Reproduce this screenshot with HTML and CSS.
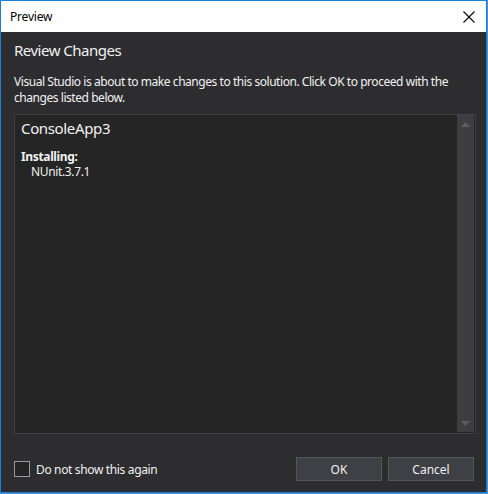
FILE: index.html
```html
<!DOCTYPE html>
<html>
<head>
<meta charset="utf-8">
<link rel="stylesheet" href="styles.css">
</head>
<body>
<div class="window">
  <div class="titlebar">
    <span class="title">Preview</span>
    <svg class="close" width="12" height="12" viewBox="0 0 12 12"><path d="M0.5 0.5 L11.5 11.5 M11.5 0.5 L0.5 11.5" stroke="#000" stroke-width="1.1" fill="none"/></svg>
  </div>
  <div class="body">
    <div class="heading">Review Changes</div>
    <div class="desc">Visual Studio is about to make changes to this solution. Click OK to proceed with the changes listed below.</div>
    <div class="changes">
      <div class="list">
        <div class="project">ConsoleApp3</div>
        <div class="label">Installing:</div>
        <div class="item">NUnit.3.7.1</div>
      </div>
      <div class="scrollbar">
        <svg width="9" height="5" viewBox="0 0 9 5"><path d="M0 5 L4.5 0 L9 5 Z" fill="#5e5e62"/></svg>
        <svg width="9" height="5" viewBox="0 0 9 5"><path d="M0 0 L4.5 5 L9 0 Z" fill="#5e5e62"/></svg>
      </div>
    </div>
    <div class="footer">
      <label class="check"><span class="box"></span>Do not show this again</label>
      <div class="buttons">
        <button class="btn">OK</button>
        <button class="btn">Cancel</button>
      </div>
    </div>
  </div>
</div>
</body>
</html>
```
FILE: styles.css
```css
html, body {
  margin: 0;
  padding: 0;
  background: #4a8fd6;
  width: 488px;
  height: 494px;
  overflow: hidden;
}
.window {
  width: 487px;
  height: 493px;
  box-sizing: border-box;
  border: 1px solid #1a7fd8;
  display: flex;
  flex-direction: column;
  font-family: "Noto Sans", "Open Sans", sans-serif;
  font-size: 12px;
  letter-spacing: -0.35px;
}
.titlebar {
  height: 31px;
  background: #ffffff;
  display: flex;
  align-items: center;
  justify-content: space-between;
  padding: 0 10px 0 9px;
  flex: none;
}
.title {
  color: #000;
  font-size: 12px;
  letter-spacing: -0.2px;
}
.close {
  display: block;
  margin-right: 1px;
}
.body {
  flex: 1;
  background: #2d2d30;
  color: #f1f1f1;
  padding: 0 10px 0 13px;
  display: flex;
  flex-direction: column;
}
.heading {
  font-size: 15px;
  margin-top: 8px;
  line-height: 20px;
  letter-spacing: -0.5px;
}
.desc {
  margin-top: 14px;
  line-height: 16px;
  letter-spacing: -0.45px;
}
.changes {
  margin-top: 8px;
  height: 320px;
  box-sizing: border-box;
  border: 1px solid #3f3f46;
  background: #252526;
  display: flex;
}
.list {
  flex: 1;
  padding: 3px 0 0 6px;
}
.project {
  font-size: 15px;
  line-height: 20px;
  letter-spacing: -0.35px;
}
.label {
  font-weight: bold;
  margin-top: 11px;
  line-height: 15px;
}
.item {
  padding-left: 10px;
  line-height: 15px;
}
.scrollbar {
  width: 17px;
  background: #3e3e42;
  margin: 0 1px 1px 0;
  display: flex;
  flex-direction: column;
  justify-content: space-between;
  align-items: center;
  padding: 7px 0 6px;
}
.scrollbar svg {
  display: block;
}
.footer {
  display: flex;
  justify-content: space-between;
  align-items: center;
  margin-top: 23px;
}
.check {
  display: flex;
  align-items: center;
  gap: 6px;
}
.box {
  width: 14px;
  height: 14px;
  border: 1px solid #999999;
  background: #252526;
}
.buttons {
  display: flex;
  gap: 6px;
  margin-right: 2px;
}
.btn {
  width: 86px;
  height: 24px;
  box-sizing: border-box;
  background: #3f3f46;
  border: 1px solid #555555;
  color: #f1f1f1;
  font-family: "Noto Sans", "Open Sans", sans-serif;
  font-size: 12px;
  padding: 0;
}
```
